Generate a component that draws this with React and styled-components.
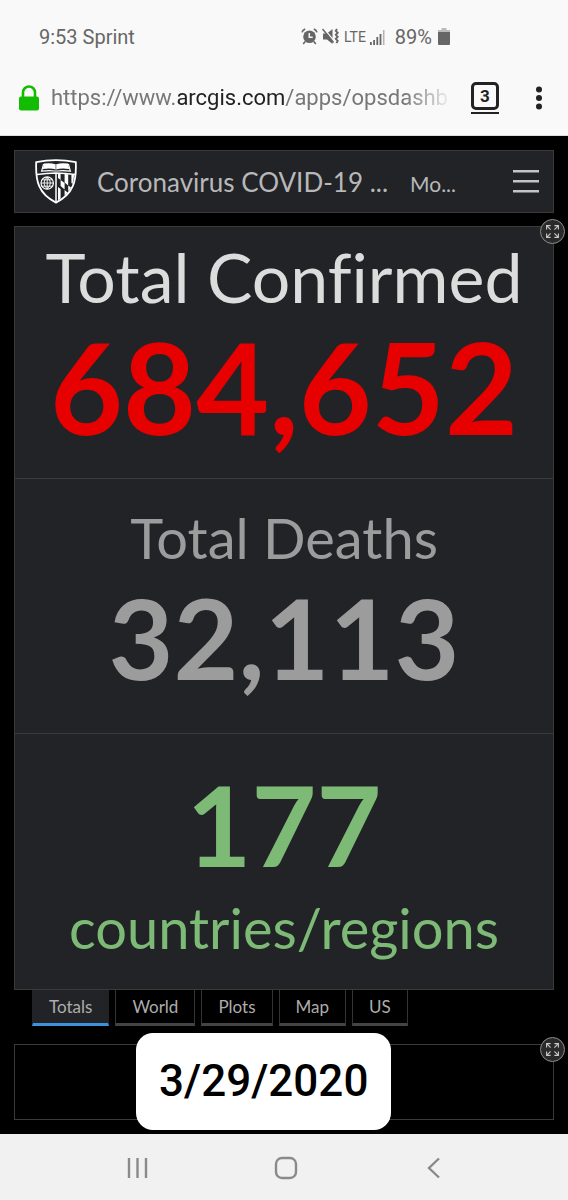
import styled, { createGlobalStyle } from 'styled-components'

const GlobalStyle = createGlobalStyle`
  * {
    box-sizing: border-box;
  }

  body {
    margin: 0;
    background: #000;
    font-family: Lato, "Liberation Sans", sans-serif;
  }

  h1, h2, p {
    margin: 0;
  }

  button {
    margin: 0;
    padding: 0;
    border: 0;
    background: none;
    color: inherit;
    font: inherit;
    cursor: pointer;
  }

  svg {
    display: block;
    flex: none;
  }
`

const Screen = styled.div`
  display: flex;
  flex-direction: column;
  min-height: 100vh;
`

/* phone status bar */

const StatusBar = styled.div`
  display: flex;
  align-items: center;
  justify-content: space-between;
  height: 73px;
  padding: 0 118px 0 39px;
  background: #f9f9f9;
  color: #666;
  font: 400 20px/24px Roboto, sans-serif;
`

const StatusIcons = styled.div`
  display: flex;
  align-items: center;
  gap: 4px;
`

const Network = styled.span`
  font-size: 14px;
`

const Battery = styled.span`
  display: flex;
  align-items: center;
  gap: 6px;
  margin-left: 6px;
`

/* browser toolbar */

const Toolbar = styled.div`
  display: flex;
  align-items: center;
  height: 63px;
  padding: 0 20px 12px 19px;
  background: #f9f9f9;
  border-bottom: 1px solid #ddd;
`

const Address = styled.button`
  flex: 1;
  min-width: 0;
  margin: 0 18px 0 12px;
  overflow: hidden;
  white-space: nowrap;
  text-align: left;
  color: #777;
  font: 400 22px/28px Roboto, sans-serif;
  mask-image: linear-gradient(to right, #000 calc(100% - 48px), transparent);
`

const Host = styled.span`
  color: #222;
`

const TabCount = styled.button`
  padding-bottom: 2px;
  border-bottom: 2px solid #222;
`

const TabNumber = styled.span`
  display: block;
  width: 28px;
  height: 28px;
  border: 3px solid #222;
  border-radius: 5px;
  color: #222;
  font: 700 17px/22px Roboto, sans-serif;
  text-align: center;
`

const MoreButton = styled.button`
  margin-left: 31px;
  padding: 4px 5px;
`

/* dashboard */

const Dashboard = styled.main`
  flex: 1;
  padding: 14px;
  background: #000;
`

const Header = styled.header`
  display: flex;
  align-items: center;
  height: 63px;
  padding: 0 14px 0 20px;
  background: #222326;
  border: 1px solid #3a3a3a;
  color: #b8b8ba;
`

const Title = styled.h1`
  margin-left: 20px;
  font-size: 26px;
  line-height: 32px;
  font-weight: 400;
  white-space: nowrap;
`

const Subtitle = styled.p`
  flex: 1;
  margin-left: 22px;
  padding-top: 4px;
  font-size: 21px;
  line-height: 28px;
  font-weight: 400;
`

const Panel = styled.section`
  position: relative;
  margin-top: ${({ $gap }) => $gap}px;
  border: 1px solid #3a3a3a;
`

const Indicator = styled.div`
  display: flex;
  flex-direction: column;
  align-items: center;
  gap: ${({ $gap }) => $gap}px;
  padding: ${({ $pad }) => $pad};
  background: #222326;
  color: ${({ $color }) => $color};

  & + & {
    border-top: 1px solid #3a3a3a;
  }
`

const Label = styled.h2`
  color: ${({ $color }) => $color || 'inherit'};
  font-size: ${({ $large }) => ($large ? 68 : 56)}px;
  line-height: ${({ $large }) => ($large ? 80 : 64)}px;
  font-weight: 400;
  font-variant-ligatures: none;
  white-space: nowrap;
`

const Value = styled.p`
  font-size: ${({ $large }) => ($large ? 126 : 112)}px;
  line-height: ${({ $large }) => ($large ? 120 : 104)}px;
  font-weight: 700;
`

const ExpandButton = styled.button`
  position: absolute;
  top: -8px;
  right: -12px;
  display: grid;
  place-items: center;
  width: 25px;
  height: 25px;
  border: 1px solid #8c8c8c;
  border-radius: 50%;
  background: #2a2a2b;
`

const Tabs = styled.nav`
  display: flex;
  gap: 6px;
  padding-left: 18px;
`

const Tab = styled.button`
  height: 36px;
  padding: 0 16px;
  border: 1px solid #333;
  border-top: 0;
  border-bottom: 3px solid #444;
  color: #adadad;
  font-size: 17px;
  line-height: 32px;

  &[aria-selected='true'] {
    background: #222326;
    border-color: #222326;
    border-bottom-color: #3c93dd;
  }
`

const EmptyBody = styled.div`
  height: 74px;
`

const DateStamp = styled.time`
  position: absolute;
  top: -12px;
  left: 121px;
  padding: 20px 23px 21px;
  border-radius: 17px;
  background: #fff;
  color: #000;
  font: 500 44px/56px Roboto, sans-serif;
`

/* phone navigation */

const NavBar = styled.nav`
  display: flex;
  justify-content: center;
  height: 67px;
  padding-left: 4px;
  background: #f1f1f1;
`

const NavButton = styled.button`
  display: grid;
  place-items: center;
  width: 148px;
`

function AlarmIcon() {
  return (
    <svg width="17" height="17" viewBox="0 0 17 17" fill="none">
      <circle cx="8.5" cy="8.7" r="6.3" fill="#666" />
      <path d="M8.3 5v4.2h3.4" stroke="#f9f9f9" strokeWidth="1.5" />
      <path d="M1 4.4Q1.6 2 4.2 1M16 4.4Q15.4 2 12.8 1M4.2 13.6l-2 2.4M12.8 13.6l2 2.4" stroke="#666" strokeWidth="1.6" />
    </svg>
  )
}

function VibrateIcon() {
  return (
    <svg width="18" height="17" viewBox="0 0 18 17" fill="none">
      <path d="M1 5.5h4L10.5 1v15L5 11.5H1z" fill="#666" />
      <path d="M1.5 0l11 13.5" stroke="#f9f9f9" strokeWidth="1.2" />
      <path d="M.5 1l11 13.5" stroke="#666" strokeWidth="1.5" />
      <path d="M15 1l-1.2 1.8 1.9 2-1.9 2 1.9 2-1.9 2 1.9 2-1.2 2.4" stroke="#666" strokeWidth="1.9" />
    </svg>
  )
}

function SignalIcon() {
  return (
    <svg width="15" height="16" viewBox="0 0 15 16" fill="#666">
      <path d="M0 13h1.8v3H0zM3.2 11H5v5H3.2zM6.4 8h1.8v8H6.4zM9.6 5h1.8v11H9.6z" />
      <path d="M12.9 1h1.6v15h-1.6z" fill="#b5b5b5" />
    </svg>
  )
}

function BatteryIcon() {
  return (
    <svg width="12" height="17" viewBox="0 0 12 17">
      <path d="M3.5 0h5v2H12v3H0V2h3.5z" fill="#bbb" />
      <path d="M0 4h12v12q0 1-1 1H1q-1 0-1-1z" fill="#666" />
    </svg>
  )
}

function LockIcon() {
  return (
    <svg width="20" height="26" viewBox="0 0 20 26">
      <path d="M4 13V7.5a6 6 0 0 1 12 0V13" fill="none" stroke="#12bc00" strokeWidth="2.6" />
      <rect y="11.5" width="20" height="14" rx="2" fill="#12bc00" />
    </svg>
  )
}

function Crest() {
  return (
    <svg width="42" height="45" viewBox="0 0 42 45" fill="none" role="img" aria-label="Johns Hopkins University">
      <defs>
        <clipPath id="field">
          <path d="M21.5 14.4q9 0 17.6 1.6Q38.2 34 21.5 42z" />
        </clipPath>
      </defs>
      <path d="M1.2 3.2Q21 -.8 40.8 3.2C41.6 22 38.5 35 21 43.6 3.5 35 .4 22 1.2 3.2z" stroke="#fff" strokeWidth="1.8" />
      <path d="M2 15.6Q21 12.2 40 15.6M21 14v29" stroke="#fff" strokeWidth="1.5" />
      {/* open book */}
      <path d="M9 4.6q7-1.2 11.8 1Q26 3.4 33 4.6l1.2 5.4q-8-1.4-13.2.6-5.2-2-13.2-.6z" fill="#fff" />
      <path d="M8.6 5l-2 7.2q8-1.2 12.6-.2h3.6q4.6-1 12.6.2l-2-7.2" stroke="#fff" strokeWidth="1.2" />
      <path d="M20.9 6v4" stroke="#222326" strokeWidth=".6" />
      {/* globe */}
      <circle cx="12.2" cy="24" r="6.2" stroke="#fff" strokeWidth="1.2" />
      <path d="M6 24h12.4M12.2 18v12M7.2 20.8h10M7.2 27.2h10M12.2 18q-6.4 6 0 12M12.2 18q6.4 6 0 12" stroke="#fff" strokeWidth=".9" />
      {/* counterchanged stripes */}
      <g clipPath="url(#field)" fill="#fff">
        <path d="M23 14h2.6v7l-2.6-2zM25.6 21l4 3v6.5l-4-3.5zM29.6 14h3.6v12.5l-3.6-3zM33.2 26.5l3.6 2.5v5l-3.6-2.5zM36.4 14H40v13l-3.6-3zM23 28l2.6 2v12H23zM29.6 31l3.6 3v6h-3.6z" />
      </g>
    </svg>
  )
}

function ExpandIcon() {
  return (
    <svg width="13" height="13" viewBox="0 0 13 13" fill="none" stroke="#c8c8c8" strokeWidth="1.1">
      <path d="M.6 4.6v-4h4M.6 .6l4 4M8.4 .6h4v4M12.4 .6l-4 4M.6 8.4v4h4M.6 12.4l4-4M8.4 12.4h4v-4M12.4 12.4l-4-4" />
    </svg>
  )
}

const tabs = ['Totals', 'World', 'Plots', 'Map', 'US']

export default function App() {
  return (
    <>
      <GlobalStyle />
      <Screen>
        <StatusBar>
          <span>9:53 Sprint</span>
          <StatusIcons>
            <AlarmIcon />
            <VibrateIcon />
            <Network>LTE</Network>
            <SignalIcon />
            <Battery>
              89%
              <BatteryIcon />
            </Battery>
          </StatusIcons>
        </StatusBar>

        <Toolbar>
          <LockIcon />
          <Address aria-label="Edit address">
            https://www.<Host>arcgis.com</Host>/apps/opsdashb
          </Address>
          <TabCount aria-label="3 open tabs">
            <TabNumber>3</TabNumber>
          </TabCount>
          <MoreButton aria-label="More options">
            <svg width="8" height="24" viewBox="0 0 8 24" fill="#222">
              <circle cx="4" cy="3.5" r="3" />
              <circle cx="4" cy="12" r="3" />
              <circle cx="4" cy="20.5" r="3" />
            </svg>
          </MoreButton>
        </Toolbar>

        <Dashboard>
          <Header>
            <Crest />
            <Title>Coronavirus COVID-19 ...</Title>
            <Subtitle>Mo...</Subtitle>
            <button aria-label="Menu">
              <svg width="26" height="24" viewBox="0 0 26 24" fill="#c4c4c6">
                <path d="M0 0h26v2.5H0zM0 10h26v2.5H0zM0 20h26v2.5H0z" />
              </svg>
            </button>
          </Header>

          <Panel $gap={13}>
            <Indicator $color="#e60000" $gap={10} $pad="10px 0 31px">
              <Label $large $color="#dcdcdc">Total Confirmed</Label>
              <Value $large>684,652</Value>
            </Indicator>
            <Indicator $color="#9c9c9c" $gap={15} $pad="27px 0 44px">
              <Label>Total Deaths</Label>
              <Value>32,113</Value>
            </Indicator>
            <Indicator $color="#7dba76" $gap={20} $pad="38px 0 29px">
              <Value>177</Value>
              <Label>countries/regions</Label>
            </Indicator>
            <ExpandButton aria-label="Expand totals">
              <ExpandIcon />
            </ExpandButton>
          </Panel>

          <Tabs role="tablist">
            {tabs.map((name) => (
              <Tab key={name} role="tab" aria-selected={name === 'Totals'}>
                {name}
              </Tab>
            ))}
          </Tabs>

          <Panel $gap={18}>
            <EmptyBody />
            <DateStamp dateTime="2020-03-29">3/29/2020</DateStamp>
            <ExpandButton aria-label="Expand panel">
              <ExpandIcon />
            </ExpandButton>
          </Panel>
        </Dashboard>

        <NavBar>
          <NavButton aria-label="Recent apps">
            <svg width="22" height="22" viewBox="0 0 22 22" stroke="#8a8a8a" strokeWidth="2.4">
              <path d="M2 1v20M10.5 1v20M19 1v20" />
            </svg>
          </NavButton>
          <NavButton aria-label="Home">
            <svg width="24" height="24" viewBox="0 0 24 24" fill="none" stroke="#8a8a8a" strokeWidth="2.4">
              <rect x="2" y="2" width="20" height="20" rx="6" />
            </svg>
          </NavButton>
          <NavButton aria-label="Back">
            <svg width="14" height="22" viewBox="0 0 14 22" fill="none" stroke="#8a8a8a" strokeWidth="2.4">
              <path d="M12 1.5L2 11l10 9.5" />
            </svg>
          </NavButton>
        </NavBar>
      </Screen>
    </>
  )
}
